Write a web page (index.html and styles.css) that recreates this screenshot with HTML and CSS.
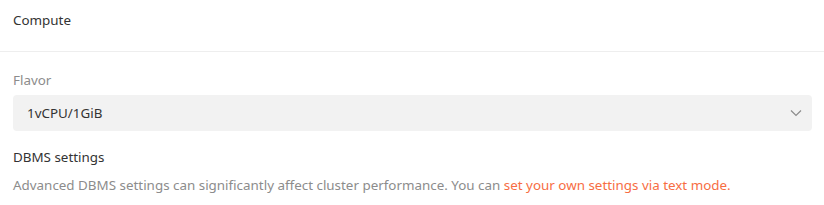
FILE: index.html
```html
<!DOCTYPE html>
<html lang="en">
<head>
  <meta charset="UTF-8" />
  <title>Compute</title>
  <link rel="stylesheet" href="styles.css">
</head>
<body>
  <div class="section-head">
    <h2>Compute</h2>
  </div>

  <div class="section-body">
    <div class="field">
      <label class="field-label">Flavor</label>
      <div class="select">
        <span class="select-value">1vCPU/1GiB</span>
        <svg class="chevron" width="12" height="8" viewBox="0 0 12 8">
          <path d="M1 1.5 L6 6.5 L11 1.5" stroke="#8c8c8c" stroke-width="1.2" fill="none"/>
        </svg>
      </div>
    </div>

    <div class="dbms">
      <div class="dbms-title">DBMS settings</div>
      <p class="dbms-note">Advanced DBMS settings can significantly affect cluster performance. You can <a href="#">set your own settings via text mode.</a></p>
    </div>
  </div>
</body>
</html>
```

FILE: styles.css
```css
body {
  margin: 0;
  font-family: "Noto Sans", "Open Sans", sans-serif;
  font-size: 13.4px;
  color: #333;
  background: #fff;
}

.section-head {
  padding: 11px 13px 0;
  height: 40px;
  border-bottom: 1px solid #eeeeee;
}

.section-head h2 {
  margin: 0;
  font-size: 13.4px;
  font-weight: normal;
  line-height: 18px;
}

.section-body {
  padding: 19px 12px 0 13px;
}

.field-label {
  display: block;
  color: #8c8c8c;
  line-height: 18px;
  margin-bottom: 6px;
}

.select {
  display: flex;
  align-items: center;
  justify-content: space-between;
  height: 36px;
  padding: 0 10px 0 14px;
  background: #f2f2f2;
  border-radius: 4px;
}

.select-value {
  color: #333;
}

.dbms {
  margin-top: 17px;
}

.dbms-title {
  line-height: 18px;
}

.dbms-note {
  margin: 10px 0 0;
  color: #8c8c8c;
  line-height: 18px;
}

.dbms-note a {
  color: #f76d43;
  text-decoration: none;
}
```
